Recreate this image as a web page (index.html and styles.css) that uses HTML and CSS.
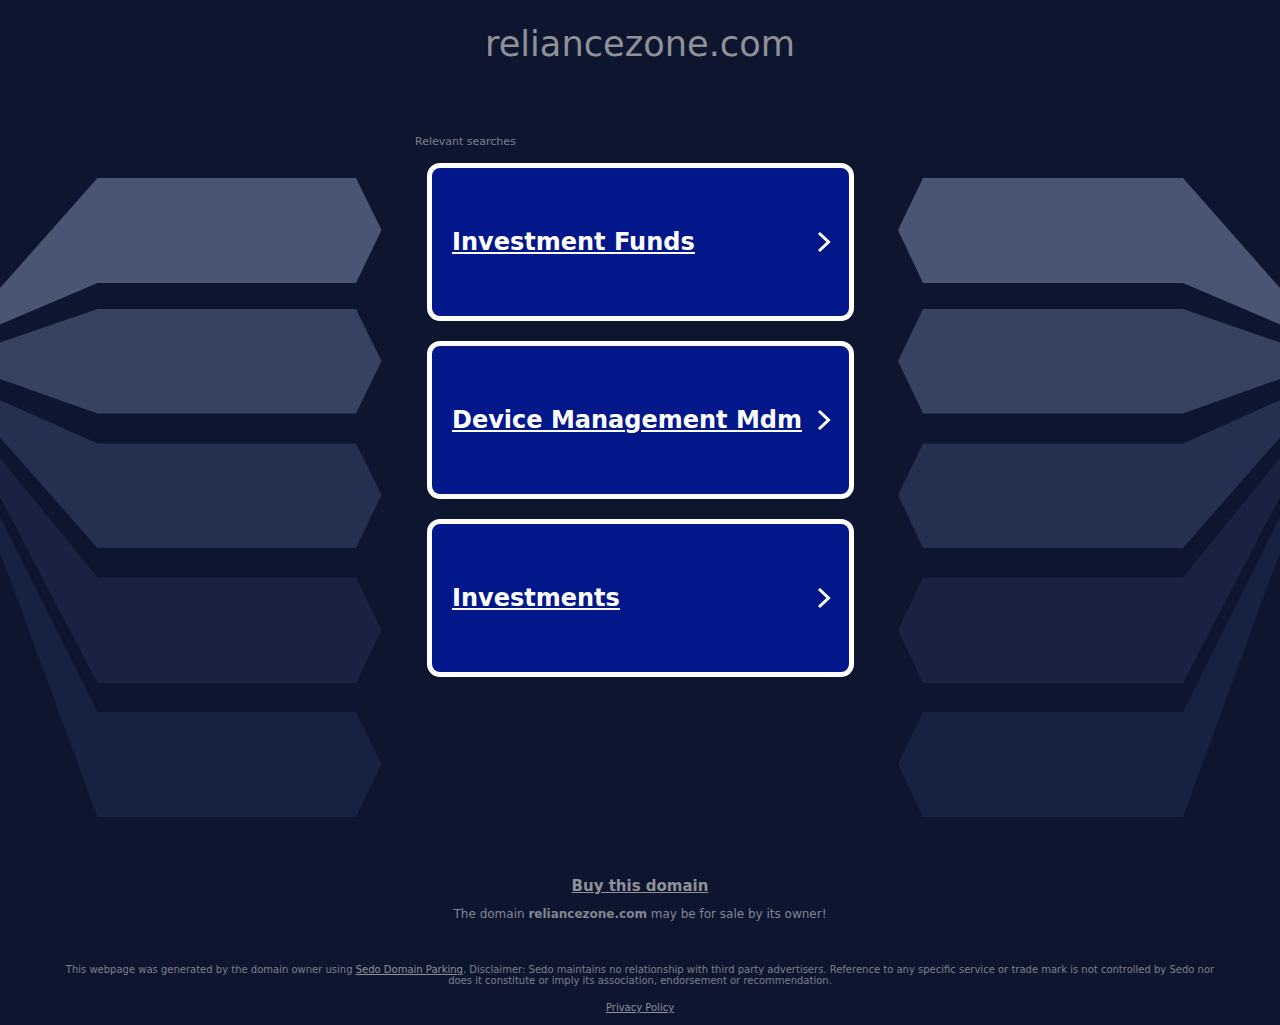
FILE: index.html
```html
<!DOCTYPE html>
<html lang="en">
<head>
<meta charset="utf-8">
<title>reliancezone.com</title>
<link rel="stylesheet" href="styles.css">
</head>
<body>
<svg class="backdrop" viewBox="0 0 1280 1025" aria-hidden="true">
  <g>
    <polygon class="s1" points="97.5,178 356,178 381.5,230 356,283 97.5,283 0,324.5 0,288"/>
    <polygon class="s2" points="97.5,309 356,309 381.5,361 356,413.5 97.5,413.5 0,379 0,342.5"/>
    <polygon class="s3" points="97.5,443.500 356,443.500 381.5,495 356,548 97.5,548 0,437.5 0,400"/>
    <polygon class="s4" points="97.5,577.5 356,577.5 381.5,630 356,683 97.5,683 0,497 0,458"/>
    <polygon class="s5" points="97.5,712 356,712 381.5,764 356,817 97.5,817 0,552 0,517"/>
  </g>
  <g>
    <polygon class="s1" points="1183,178 923,178 898,230 923,283 1183,283 1280,324.5 1280,288"/>
    <polygon class="s2" points="1183,309 923,309 898,361 923,413.5 1183,413.5 1280,379 1280,342.5"/>
    <polygon class="s3" points="1183,443.500 923,443.500 898,495 923,548 1183,548 1280,437.5 1280,400"/>
    <polygon class="s4" points="1183,577.5 923,577.5 898,630 923,683 1183,683 1280,497 1280,458"/>
    <polygon class="s5" points="1183,712 923,712 898,764 923,817 1183,817 1280,552 1280,517"/>
  </g>
</svg>
<main class="page">
  <h1 class="domain">reliancezone.com</h1>
  <section class="searches">
    <p class="searches-label">Relevant searches</p>
    <ul class="card-list">
      <li><a class="card" href="#"><span class="card-text">Investment Funds</span><svg class="chevron" viewBox="0 0 14 22"><polyline points="2,2 11.500,11 2,20"/></svg></a></li>
      <li><a class="card" href="#"><span class="card-text">Device Management Mdm</span><svg class="chevron" viewBox="0 0 14 22"><polyline points="2,2 11.500,11 2,20"/></svg></a></li>
      <li><a class="card" href="#"><span class="card-text">Investments</span><svg class="chevron" viewBox="0 0 14 22"><polyline points="2,2 11.500,11 2,20"/></svg></a></li>
    </ul>
  </section>
  <section class="sale">
    <a class="buy" href="#">Buy this domain</a>
    <p class="sale-note">The domain <strong>reliancezone.com</strong> may be for sale by its owner!</p>
  </section>
  <footer class="legal">
    <p class="disclaimer">This webpage was generated by the domain owner using <a href="#">Sedo Domain Parking</a>. Disclaimer: Sedo maintains no relationship with third party advertisers. Reference to any specific service or trade mark is not controlled by Sedo nor does it constitute or imply its association, endorsement or recommendation.</p>
    <a class="privacy" href="#">Privacy Policy</a>
  </footer>
</main>
</body>
</html>
```

FILE: styles.css
```css
* { box-sizing: border-box; }

html, body {
  margin: 0;
  height: 100%;
}

body {
  background: #0e152f;
  font-family: "DejaVu Sans", sans-serif;
  color: #8f9199;
  overflow: hidden;
  position: relative;
}

.backdrop {
  position: absolute;
  inset: 0;
  width: 1280px;
  height: 1025px;
}

.s1 { fill: #4a5573; }
.s2 { fill: #374160; }
.s3 { fill: #252f50; }
.s4 { fill: #192341; }
.s5 { fill: #172240; }

.page {
  position: relative;
  display: flex;
  flex-direction: column;
  align-items: center;
}

.domain {
  margin: 23px 0 0;
  font-size: 35.2px;
  line-height: 42px;
  font-weight: 400;
  color: #8f9199;
}

.searches {
  width: 450px;
  margin-top: 70px;
}

.searches-label {
  margin: 0;
  font-size: 11px;
  line-height: 13px;
  color: #7d808b;
}

.card-list {
  list-style: none;
  margin: 15px 0 0;
  padding: 0 11px 0 12px;
  display: flex;
  flex-direction: column;
  gap: 20px;
}

.card {
  display: flex;
  align-items: center;
  justify-content: space-between;
  height: 158px;
  padding: 0 18px 0 20px;
  border: 5px solid #fff;
  border-radius: 13px;
  background: #02178a;
  color: #fff;
}

.card-text {
  font-size: 24px;
  font-weight: 700;
  line-height: 30px;
  text-decoration: underline;
  white-space: nowrap;
}

.chevron {
  width: 14px;
  height: 22px;
  flex: none;
  fill: none;
  stroke: #fff;
  stroke-width: 3;
}

.sale {
  margin-top: 199px;
  text-align: center;
}

.buy {
  font-size: 15px;
  line-height: 19px;
  font-weight: 700;
  color: #8f9199;
}

.sale-note {
  margin: 11px 0 0;
  font-size: 12px;
  line-height: 15px;
  color: #83868f;
}

.legal {
  width: 1160px;
  margin-top: 42px;
  text-align: center;
  font-size: 10px;
  line-height: 11px;
  color: #7d808b;
}

.disclaimer {
  margin: 0;
}

.legal a {
  color: #8f9199;
}

.privacy {
  display: inline-block;
  margin-top: 16px;
}
```
